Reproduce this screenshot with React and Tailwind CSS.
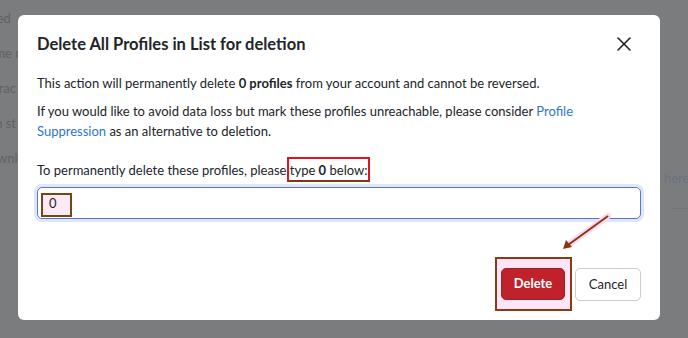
import { X } from 'lucide-react'

const font = { fontFamily: 'Lato, "Noto Sans", sans-serif' }

function Backdrop() {
  return (
    <div className="flex h-full">
      <div className="flex flex-col w-[40px] overflow-hidden text-[13px] text-[#606164] whitespace-nowrap">
        <div className="-ml-[20px] pt-[8px] flex flex-col gap-[15px] leading-[20px]">
          <span>Need</span>
          <span>Some m</span>
          <span>Extrac</span>
          <span>Run st</span>
          <span>Downloa</span>
        </div>
      </div>
      <div className="flex-1" />
      <div className="w-[40px] flex flex-col">
        <div className="mt-[168px] pl-[16px] text-[13px] text-[#6a7080] leading-[20px]">here</div>
        <div className="mt-[20px] ml-[24px] border-t border-[#737476]" />
      </div>
    </div>
  )
}

export default function App() {
  return (
    <div className="relative w-[688px] h-[338px] overflow-hidden bg-[#7b7c7e]" style={font}>
      <Backdrop />

      {/* Modal */}
      <div className="absolute left-[18px] top-[15px] w-[642px] h-[305px] bg-white rounded-[6px] flex flex-col text-[#212529]">
        <div className="flex items-center justify-between pl-[19px] pr-[24px] h-[58px]">
          <h2 className="text-[16.5px] font-bold leading-[26px]">Delete All Profiles in List for deletion</h2>
          <X className="w-[24px] h-[24px] text-[#222]" strokeWidth={1.6} />
        </div>

        <div className="px-[19px] text-[13px] leading-[20px]">
          <p>
            This action will permanently delete <b className="font-bold">0 profiles</b> from your account and cannot be reversed.
          </p>
          <p className="mt-[8px]">
            If you would like to avoid data loss but mark these profiles unreachable, please consider{' '}
            <span className="text-[#2f74cf]">Profile</span>
            <br />
            <span className="text-[#2f74cf]">Suppression</span> as an alternative to deletion.
          </p>
          <p className="mt-[19px]">
            To permanently delete these profiles, please{' '}
            <span className="relative">
              <span className="absolute -left-[3px] -right-[3px] -top-[5px] -bottom-[4px] border-2 border-[#e1141c] border-b-[#7a3b14]" />
              type <b className="font-bold">0</b> below:
            </span>
          </p>

          <div className="mt-[7px] h-[32px] rounded-[5px] border border-[#5e73c9] ring-[3px] ring-[#dde6fb] flex items-center pl-[10px] relative">
            <span className="absolute left-[3px] top-[5px] w-[31px] h-[24px] border-2 border-[#6e4a14] bg-[#fde9f6]" />
            <span className="relative pl-[1px]">0</span>
          </div>
        </div>

        <div className="mt-auto mb-[19px] flex justify-end gap-[10px] pr-[19px]">
          <div className="relative">
            <span className="absolute -left-[6px] -right-[7px] -top-[11px] -bottom-[10px] border-2 border-[#8a3a12] bg-[#fde4f6]" />
            <button className="relative h-[32px] w-[64px] rounded-[5px] bg-[#c0212b] border border-[#8e2a22] text-white font-bold text-[13px]">
              Delete
            </button>
          </div>
          <button className="h-[33px] w-[66px] rounded-[5px] bg-white border border-[#c9cbcf] text-[#212529] text-[13px]">
            Cancel
          </button>
        </div>
      </div>

      {/* annotation arrow */}
      <svg className="absolute left-0 top-0" width="688" height="338">
        <line x1="608" y1="216" x2="568" y2="245" stroke="#fbd7f2" strokeWidth="6" strokeLinecap="round" />
        <line x1="608" y1="216" x2="568" y2="245" stroke="#8a3a12" strokeWidth="2" />
        <polygon points="563,249 566,240 572,247" fill="#8a3a12" />
      </svg>
    </div>
  )
}
